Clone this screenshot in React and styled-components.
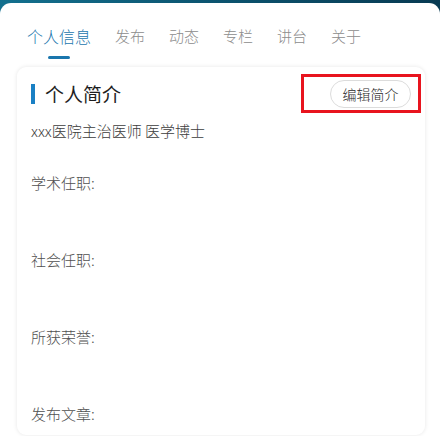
import React from "react";
import styled, { createGlobalStyle } from "styled-components";

const Global = createGlobalStyle`
  html, body { margin: 0; padding: 0; }
  body {
    background: linear-gradient(90deg, #13708e 0%, #0c5672 45%, #083a52 100%);
    font-family: "Noto Sans CJK SC", "Noto Sans", sans-serif;
    overflow: hidden;
  }
`;

const Sheet = styled.div`
  margin-top: 3px;
  background: #fff;
  border-radius: 11px 11px 0 0;
  padding: 21px 15px 0 17px;
  height: 433px;
  box-sizing: border-box;
`;

const Tabs = styled.nav`
  display: flex;
  align-items: flex-start;
  gap: 24px;
  padding-left: 10px;
`;

const Tab = styled.div`
  display: flex;
  flex-direction: column;
  align-items: center;
  gap: 8px;
  font-size: ${(p) => (p.$active ? "16px" : "15px")};
  font-weight: 300;
  line-height: 24px;
  color: ${(p) => (p.$active ? "#1a76ad" : "#8c8c8c")};
  &::after {
    content: "";
    width: 22px;
    height: 3px;
    border-radius: 2px;
    background: ${(p) => (p.$active ? "#1a76ad" : "transparent")};
  }
`;

const Card = styled.section`
  margin-top: 8px;
  background: #fff;
  border-radius: 9px;
  box-shadow: 0 0 4px rgba(0, 0, 0, 0.1);
  padding: 13px 14px 9px 14px;
  height: 368px;
  box-sizing: border-box;
`;

const Header = styled.div`
  display: flex;
  align-items: center;
  justify-content: space-between;
  height: 28px;
`;

const Title = styled.h2`
  margin: 0;
  display: flex;
  align-items: center;
  gap: 10px;
  font-size: 19px;
  font-weight: 400;
  color: #1e1e1e;
  line-height: 28px;
  &::before {
    content: "";
    width: 4px;
    height: 20px;
    background: #1a80c4;
  }
`;

const ButtonWrap = styled.div`
  position: relative;
`;

const EditButton = styled.button`
  height: 28px;
  width: 81px;
  padding: 0;
  border: 1px solid #dcdcdc;
  border-radius: 14px;
  background: #fff;
  font-family: inherit;
  font-size: 14px;
  font-weight: 300;
  color: #2a2a2a;
  line-height: 26px;
`;

const Highlight = styled.div`
  position: absolute;
  left: -29px;
  right: -10px;
  top: -6px;
  bottom: -5px;
  border: 3px solid #e8141e;
  pointer-events: none;
`;

const Subtitle = styled.p`
  margin: 12px 0 0 0;
  font-size: 15px;
  font-weight: 300;
  line-height: 22px;
  color: #3c3c3c;
`;

const Sections = styled.div`
  margin-top: 30px;
  display: flex;
  flex-direction: column;
`;

const Field = styled.div`
  min-height: ${(p) => (p.$last ? "22px" : "77px")};
  font-size: 15px;
  font-weight: 300;
  line-height: 22px;
  color: #505050;
`;

const tabs = ["个人信息", "发布", "动态", "专栏", "讲台", "关于"];
const fields = ["学术任职:", "社会任职:", "所获荣誉:", "发布文章:"];

export default function App() {
  return (
    <>
      <Global />
      <Sheet>
        <Tabs>
          {tabs.map((t, i) => (
            <Tab key={t} $active={i === 0}>
              {t}
            </Tab>
          ))}
        </Tabs>
        <Card>
          <Header>
            <Title>个人简介</Title>
            <ButtonWrap>
              <EditButton>编辑简介</EditButton>
              <Highlight />
            </ButtonWrap>
          </Header>
          <Subtitle>xxx医院主治医师 医学博士</Subtitle>
          <Sections>
            {fields.map((f, i) => (
              <Field key={f} $last={i === fields.length - 1}>
                {f}
              </Field>
            ))}
          </Sections>
        </Card>
      </Sheet>
    </>
  );
}
